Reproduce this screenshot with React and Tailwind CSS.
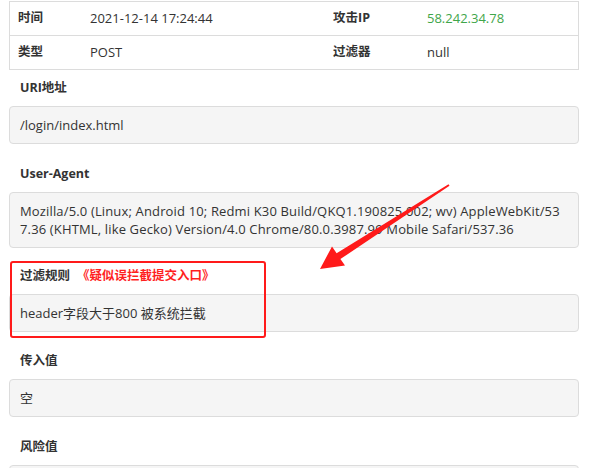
import React from 'react';

const font = { fontFamily: '"Open Sans", "Noto Sans CJK SC", sans-serif' };

function Field({ label, extra, children, className = '', boxClass = '' }) {
  return (
    <div className={className}>
      <div className="h-5 leading-5 px-[11px] text-[12.5px] font-bold text-[#333]">
        {label}
        {extra && <span className="ml-[7px] text-[#ff1f1f]">{extra}</span>}
      </div>
      <div className={`mt-[8px] bg-[#f5f5f5] border border-[#dcdcdc] rounded-[4px] px-[10px] py-[9px] text-[13px] leading-[18px] text-[#333] break-all ${boxClass}`}>
        {children}
      </div>
    </div>
  );
}

export default function App() {
  return (
    <div className="relative w-[594px] h-[468px] overflow-hidden bg-white" style={font}>
      <div className="ml-[9px] w-[570px] pt-px">
        {/* info table */}
        <div className="border border-[#dcdcdc] text-[13px] text-[#333]">
          <div className="flex h-[34px] items-center border-b border-[#dcdcdc]">
            <div className="w-[72px] pl-[8px] text-[12.5px] font-bold">时间</div>
            <div className="w-[243px] pl-[8px]">2021-12-14 17:24:44</div>
            <div className="w-[94px] pl-[8px] text-[12.5px] font-bold">攻击IP</div>
            <div className="pl-[8px] text-[#3fa64a]">58.242.34.78</div>
          </div>
          <div className="flex h-[33px] items-center">
            <div className="w-[72px] pl-[8px] text-[12.5px] font-bold">类型</div>
            <div className="w-[243px] pl-[8px]">POST</div>
            <div className="w-[94px] pl-[8px] text-[12.5px] font-bold">过滤器</div>
            <div className="pl-[8px]">null</div>
          </div>
        </div>

        <Field label="URI地址" className="mt-[8px]">/login/index.html</Field>
        <Field label="User-Agent" className="mt-[20px]" boxClass="tracking-[0.15px]">
          Mozilla/5.0 (Linux; Android 10; Redmi K30 Build/QKQ1.190825.002; wv) AppleWebKit/537.36 (KHTML, like Gecko) Version/4.0 Chrome/80.0.3987.99 Mobile Safari/537.36
        </Field>
        <Field label="过滤规则" extra="《疑似误拦截提交入口》" className="mt-[18px]">
          header字段大于800 被系统拦截
        </Field>
        <Field label="传入值" className="mt-[19px]">空</Field>
        <Field label="风险值" className="mt-[20px]">&nbsp;</Field>
      </div>

      {/* annotation box */}
      <div className="absolute left-[10px] top-[261px] w-[256px] h-[77px] border-2 border-[#ff1a1a] rounded-[3px]" />

      {/* annotation arrow */}
      <svg className="absolute left-0 top-0" width="594" height="468" viewBox="0 0 594 468">
        <polygon
          fill="#ff1a1a"
          points="448.5,184.2 336.6,253.2 332,246.5 320,269 345,265.5 340.4,259.1 449.5,185.8"
        />
      </svg>
    </div>
  );
}
